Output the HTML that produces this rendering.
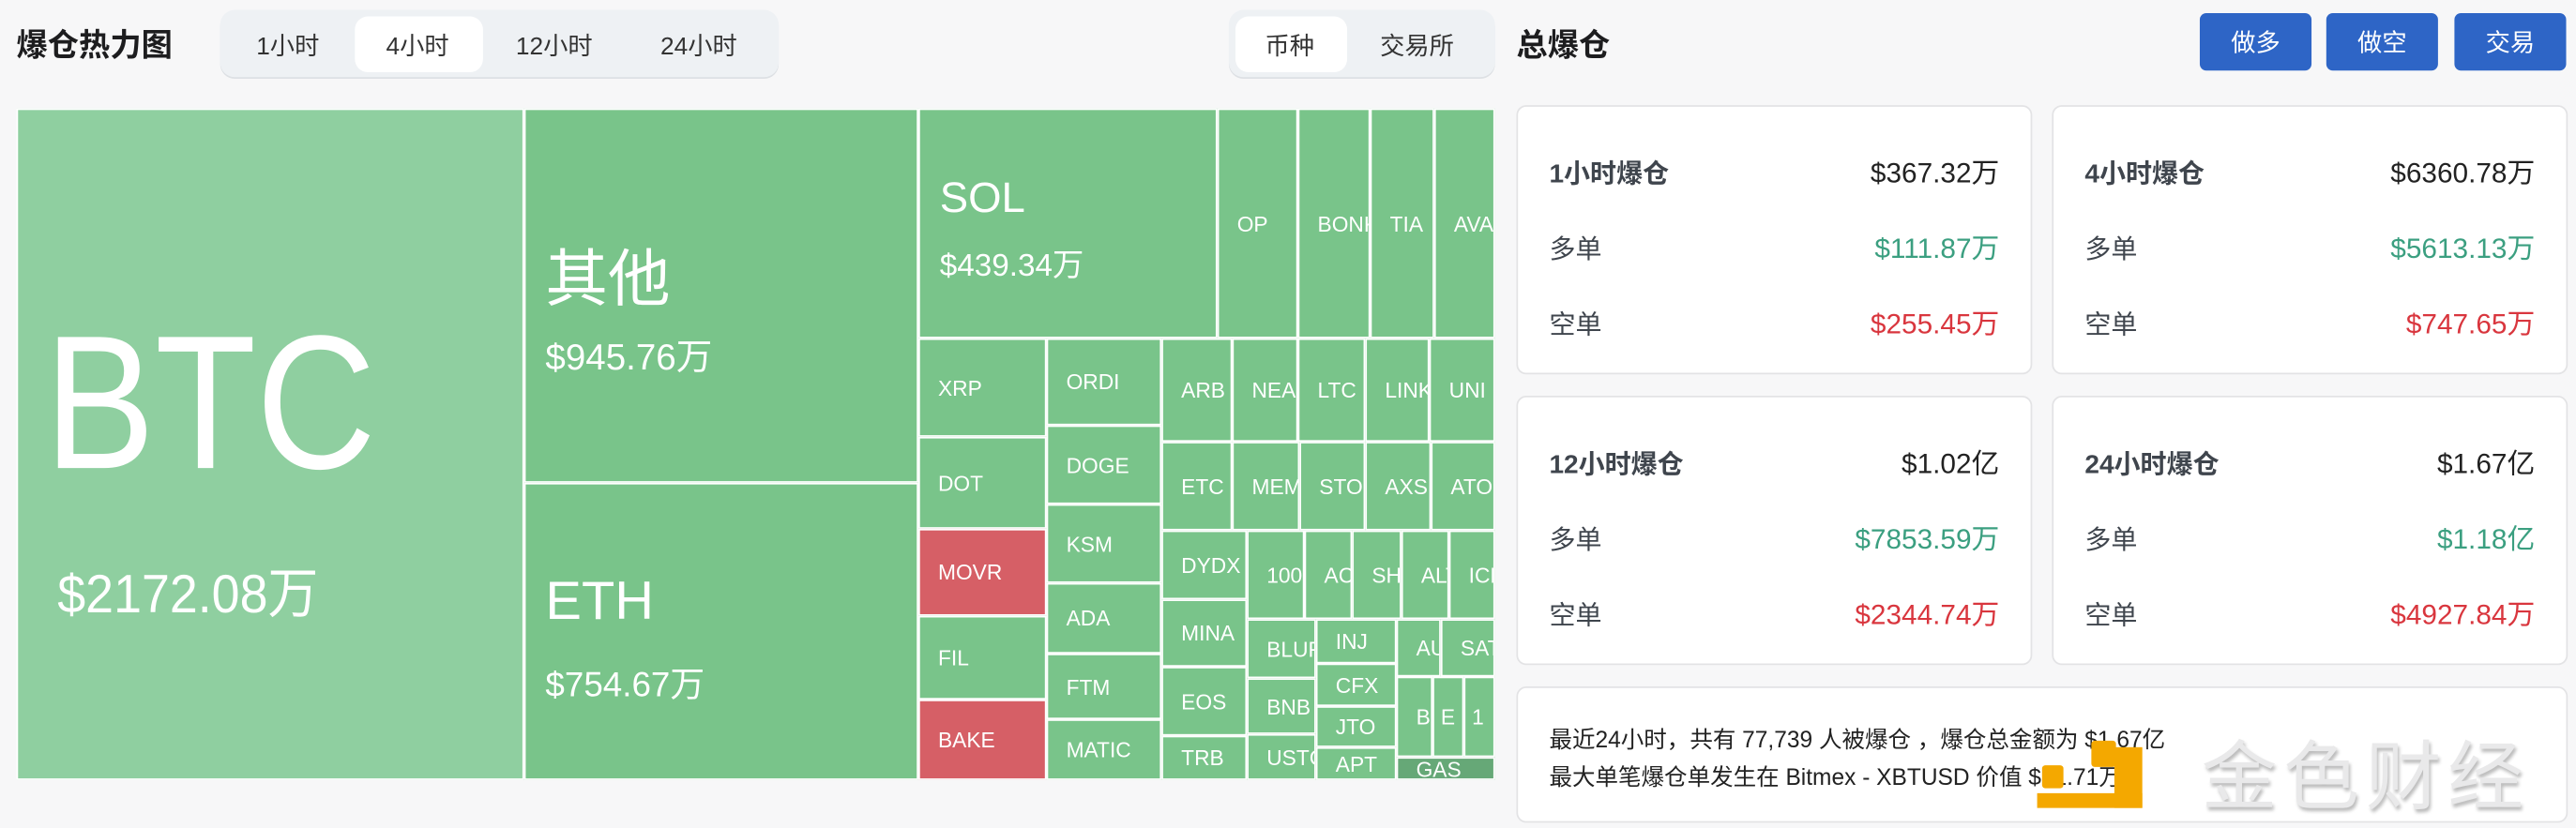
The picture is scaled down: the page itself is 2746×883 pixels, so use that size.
<!DOCTYPE html>
<html><head><meta charset="utf-8">
<style>
*{margin:0;padding:0;box-sizing:border-box}
html,body{width:2746px;height:882px;overflow:hidden;background:#f7f7f8}
#w{position:absolute;left:0;top:0;width:1568px;height:504px;transform:scale(1.75128);transform-origin:0 0;font-family:"Liberation Sans","Noto Sans CJK SC",sans-serif;color:#222}
.a{position:absolute}
.t{position:absolute;background:#79c48a;border:0.5px solid #fff;color:#fff;overflow:hidden;white-space:nowrap;font-size:13px;display:flex;align-items:center;padding-left:11px}
.r{background:#d65f66}
.card{position:absolute;background:#fff;border:1px solid #e3e3e5;border-radius:6px}
.row{position:absolute;left:19px;right:19px;display:flex;justify-content:space-between;align-items:center;font-size:16px;color:#3f454d}
.row span:last-child{font-size:17px}
.g{color:#3b9f80}.rd{color:#d9363e}.k{color:#222}
.btn{position:absolute;top:8px;height:35px;width:68px;background:#2e65c6;color:#fff;border-radius:4px;font-size:15px;display:flex;align-items:center;justify-content:center}
</style></head><body><div id="w">
<div class="a" style="left:10px;top:13px;font-size:19px;font-weight:bold;color:#1d1d1f">爆仓热力图</div>
<div class="a" style="left:134px;top:6px;width:340px;height:41px;background:#eef1f4;border-radius:9px;box-shadow:0 1px 0 #dde0e4"></div>
<div class="a" style="left:216px;top:10px;width:78px;height:34px;background:#fff;border-radius:8px"></div>
<div class="a" style="left:156px;top:17px;font-size:15px;color:#333">1小时</div>
<div class="a" style="left:235px;top:17px;font-size:15px;color:#333">4小时</div>
<div class="a" style="left:314px;top:17px;font-size:15px;color:#333">12小时</div>
<div class="a" style="left:402px;top:17px;font-size:15px;color:#333">24小时</div>
<div class="a" style="left:748px;top:6px;width:162px;height:41px;background:#eef1f4;border-radius:9px;box-shadow:0 1px 0 #dde0e4"></div>
<div class="a" style="left:752px;top:10px;width:68px;height:34px;background:#fff;border-radius:8px"></div>
<div class="a" style="left:770px;top:17px;font-size:15px;color:#333">币种</div>
<div class="a" style="left:840px;top:17px;font-size:15px;color:#333">交易所</div>
<div class="a" style="left:923px;top:13px;font-size:19px;font-weight:bold;color:#1d1d1f">总爆仓</div>
<div class="btn" style="left:1339px">做多</div>
<div class="btn" style="left:1416px">做空</div>
<div class="btn" style="left:1494px">交易</div>

<!-- treemap -->
<div class="t" style="left:10px;top:66px;width:309px;height:409px;background:#8fcfa0;display:block;padding:0">
<div class="a" style="left:16px;top:120px;font-size:116px;transform:scaleX(.87);transform-origin:0 0;line-height:1">BTC</div>
<div class="a" style="left:24px;top:268px;font-size:33px;transform:scaleX(.93);transform-origin:0 0">$2172.08万</div></div>
<div class="t" style="left:319px;top:66px;width:240px;height:228px;display:block;padding:0">
<div class="a" style="left:12px;top:72px;font-size:38px">其他</div>
<div class="a" style="left:12px;top:133px;font-size:22px">$945.76万</div></div>
<div class="t" style="left:319px;top:294px;width:240px;height:181px;display:block;padding:0">
<div class="a" style="left:12px;top:52px;font-size:33px">ETH</div>
<div class="a" style="left:12px;top:106px;font-size:21px">$754.67万</div></div>
<div class="t" style="left:559px;top:66px;width:182px;height:140px;display:block;padding:0">
<div class="a" style="left:12px;top:38px;font-size:26px">SOL</div>
<div class="a" style="left:12px;top:80px;font-size:19px">$439.34万</div></div>
<div class="t" style="left:741px;top:66px;width:49px;height:140px">OP</div>
<div class="t" style="left:790px;top:66px;width:44px;height:140px">BONK</div>
<div class="t" style="left:834px;top:66px;width:39px;height:140px">TIA</div>
<div class="t" style="left:873px;top:66px;width:37px;height:140px">AVAX</div>

<div class="t" style="left:559px;top:206px;width:78px;height:60px">XRP</div>
<div class="t" style="left:559px;top:266px;width:78px;height:56px">DOT</div>
<div class="t r" style="left:559px;top:322px;width:78px;height:53px">MOVR</div>
<div class="t" style="left:559px;top:375px;width:78px;height:51px">FIL</div>
<div class="t r" style="left:559px;top:426px;width:78px;height:49px">BAKE</div>

<div class="t" style="left:637px;top:206px;width:70px;height:53px">ORDI</div>
<div class="t" style="left:637px;top:259px;width:70px;height:48px">DOGE</div>
<div class="t" style="left:637px;top:307px;width:70px;height:48px">KSM</div>
<div class="t" style="left:637px;top:355px;width:70px;height:43px">ADA</div>
<div class="t" style="left:637px;top:398px;width:70px;height:40px">FTM</div>
<div class="t" style="left:637px;top:438px;width:70px;height:37px">MATIC</div>

<div class="t" style="left:707px;top:206px;width:43px;height:63px">ARB</div>
<div class="t" style="left:750px;top:206px;width:40px;height:63px">NEAR</div>
<div class="t" style="left:790px;top:206px;width:41px;height:63px">LTC</div>
<div class="t" style="left:831px;top:206px;width:39px;height:63px">LINK</div>
<div class="t" style="left:870px;top:206px;width:40px;height:63px">UNI</div>
<div class="t" style="left:707px;top:269px;width:43px;height:54px">ETC</div>
<div class="t" style="left:750px;top:269px;width:41px;height:54px">MEME</div>
<div class="t" style="left:791px;top:269px;width:40px;height:54px">STORJ</div>
<div class="t" style="left:831px;top:269px;width:40px;height:54px">AXS</div>
<div class="t" style="left:871px;top:269px;width:39px;height:54px">ATOM</div>

<div class="t" style="left:707px;top:323px;width:52px;height:42px">DYDX</div>
<div class="t" style="left:707px;top:365px;width:52px;height:41px">MINA</div>
<div class="t" style="left:707px;top:406px;width:52px;height:42px">EOS</div>
<div class="t" style="left:707px;top:448px;width:52px;height:27px">TRB</div>
<div class="t" style="left:759px;top:323px;width:35px;height:54px">1000</div>
<div class="t" style="left:794px;top:323px;width:29px;height:54px">ACE</div>
<div class="t" style="left:823px;top:323px;width:30px;height:54px">SHIB</div>
<div class="t" style="left:853px;top:323px;width:29px;height:54px">ALT</div>
<div class="t" style="left:882px;top:323px;width:28px;height:54px">ICP</div>
<div class="t" style="left:759px;top:377px;width:42px;height:36px">BLUR</div>
<div class="t" style="left:759px;top:413px;width:42px;height:34px">BNB</div>
<div class="t" style="left:759px;top:447px;width:42px;height:28px">USTC</div>
<div class="t" style="left:801px;top:377px;width:49px;height:27px">INJ</div>
<div class="t" style="left:801px;top:404px;width:49px;height:26px">CFX</div>
<div class="t" style="left:801px;top:430px;width:49px;height:25px">JTO</div>
<div class="t" style="left:801px;top:455px;width:49px;height:20px">APT</div>
<div class="t" style="left:850px;top:377px;width:27px;height:35px">AUC</div>
<div class="t" style="left:877px;top:377px;width:33px;height:35px">SATS</div>
<div class="t" style="left:850px;top:412px;width:22px;height:49px">B</div>
<div class="t" style="left:872px;top:412px;width:19px;height:49px;padding-left:4px">E</div>
<div class="t" style="left:891px;top:412px;width:19px;height:49px;padding-left:4px">1</div>
<div class="t" style="left:850px;top:461px;width:60px;height:14px;background:#66a877">GAS</div>

<!-- cards -->
<div class="card" style="left:923px;top:64px;width:314px;height:164px">
<div class="row" style="top:26px"><b style="font-weight:600">1小时爆仓</b><span class="k">$367.32万</span></div>
<div class="row" style="top:72px"><span>多单</span><span class="g">$111.87万</span></div>
<div class="row" style="top:118px"><span>空单</span><span class="rd">$255.45万</span></div></div>
<div class="card" style="left:1249px;top:64px;width:314px;height:164px">
<div class="row" style="top:26px"><b style="font-weight:600">4小时爆仓</b><span class="k">$6360.78万</span></div>
<div class="row" style="top:72px"><span>多单</span><span class="g">$5613.13万</span></div>
<div class="row" style="top:118px"><span>空单</span><span class="rd">$747.65万</span></div></div>
<div class="card" style="left:923px;top:241px;width:314px;height:164px">
<div class="row" style="top:26px"><b style="font-weight:600">12小时爆仓</b><span class="k">$1.02亿</span></div>
<div class="row" style="top:72px"><span>多单</span><span class="g">$7853.59万</span></div>
<div class="row" style="top:118px"><span>空单</span><span class="rd">$2344.74万</span></div></div>
<div class="card" style="left:1249px;top:241px;width:314px;height:164px">
<div class="row" style="top:26px"><b style="font-weight:600">24小时爆仓</b><span class="k">$1.67亿</span></div>
<div class="row" style="top:72px"><span>多单</span><span class="g">$1.18亿</span></div>
<div class="row" style="top:118px"><span>空单</span><span class="rd">$4927.84万</span></div></div>
<div class="card" style="left:923px;top:418px;width:640px;height:83px">
<div class="a" style="left:19px;top:20px;font-size:14px;color:#222;line-height:23px">最近24小时，共有 77,739 人被爆仓 ，爆仓总金额为 $1.67亿<br>最大单笔爆仓单发生在 Bitmex - XBTUSD 价值 $61.71万</div></div>

<!-- watermark -->
<div class="a" style="left:1287px;top:455px;width:17px;height:37px;background:#f4a800"></div>
<div class="a" style="left:1240px;top:483px;width:64px;height:9px;background:#f4a800"></div>
<div class="a" style="left:1273px;top:451px;width:15px;height:16px;background:#f4a800;border-radius:2px"></div>
<div class="a" style="left:1243px;top:466px;width:13px;height:14px;background:#f4a800;border-radius:2px"></div>
<div class="a" style="left:1340px;top:450px;font-size:46px;color:#e9e9ea;letter-spacing:4px;text-shadow:1px 2px 2px #bbb;line-height:1">金色财经</div>
</div></body></html>
